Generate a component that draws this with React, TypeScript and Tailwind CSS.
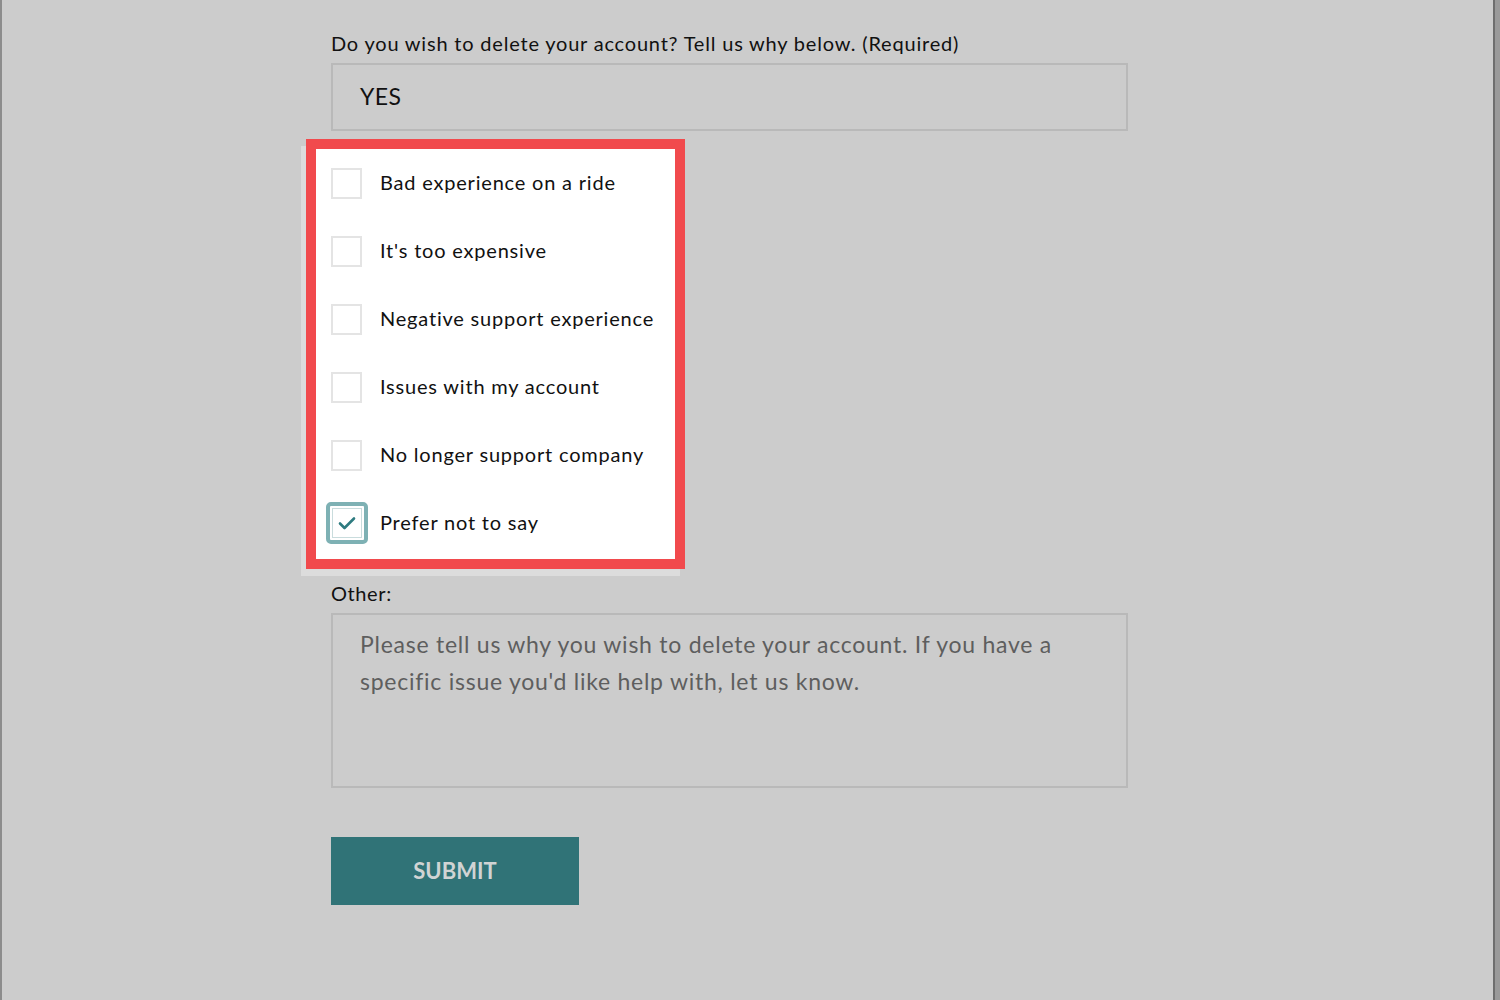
const reasons = [
  { label: "Bad experience on a ride", checked: false },
  { label: "It's too expensive", checked: false },
  { label: "Negative support experience", checked: false },
  { label: "Issues with my account", checked: false },
  { label: "No longer support company", checked: false },
  { label: "Prefer not to say", checked: true },
]

function Checkbox({ checked }: { checked: boolean }) {
  if (checked) {
    return (
      <div className="flex h-[42px] w-[42px] -ml-[5px] -mr-[6px] items-center justify-center rounded-[5px] border-[4px] border-[#7eb1b4]">
        <div className="flex h-[30px] w-[30px] items-center justify-center border border-[#c9dcdd] bg-white">
          <svg width="18" height="14" viewBox="0 0 18 14" fill="none">
            <path d="M2 7.5l4.5 4.5L16 2.5" stroke="#2e7b80" strokeWidth="2.6" strokeLinecap="round" strokeLinejoin="round" />
          </svg>
        </div>
      </div>
    )
  }
  return <div className="h-[31px] w-[31px] border-2 border-[#e4e4e4] bg-white" />
}

export default function App() {
  return (
    <div
      className="flex h-screen w-screen bg-[#cccccc] text-[#111]"
      style={{ fontFamily: "Lato, 'Open Sans', sans-serif" }}
    >
      <div className="w-[2px] flex-shrink-0 bg-[#8c8c8c]" />

      <main className="flex-1">
        <div className="ml-[329px] flex w-[797px] flex-col pt-[31px]">
          <label className="text-[20px] leading-[24px] tracking-[0.8px]">
            Do you wish to delete your account? Tell us why below. (Required)
          </label>

          <div className="mt-[8px] flex h-[68px] items-center border-2 border-[#b9b9b9] px-[27px] pb-[2px] text-[23px] tracking-[0.4px]">
            YES
          </div>

          <div className="-ml-[25px] mt-[8px] w-[379px] border-[10px] border-[#f14a4d] bg-white shadow-[-5px_7px_0_#dcdcdc]">
            <div className="flex flex-col pb-[2px] pl-[15px]">
              {reasons.map((r) => (
                <div key={r.label} className="flex h-[68px] items-center gap-[18px]">
                  <Checkbox checked={r.checked} />
                  <span className="pb-[2px] text-[20px] tracking-[0.8px]">{r.label}</span>
                </div>
              ))}
            </div>
          </div>

          <label className="mt-[12px] text-[20px] leading-[24px] tracking-[0.6px]">Other:</label>

          <div className="mt-[8px] h-[175px] border-2 border-[#b9b9b9] pl-[27px] pr-[60px] pt-[11px] text-[23px] leading-[37px] tracking-[0.75px] text-[#5e5e5e]">
            Please tell us why you wish to delete your account. If you have a specific issue you'd like help
            with, let us know.
          </div>

          <button className="mt-[49px] flex h-[68px] w-[248px] items-center justify-center pb-[2px] bg-[#307377] text-[22px] font-bold text-[#d0d4d4]">
            SUBMIT
          </button>
        </div>
      </main>

      <div className="w-[7px] flex-shrink-0 border-l-2 border-[#6e6e6e] bg-[#9a9a9a]" />
    </div>
  )
}
